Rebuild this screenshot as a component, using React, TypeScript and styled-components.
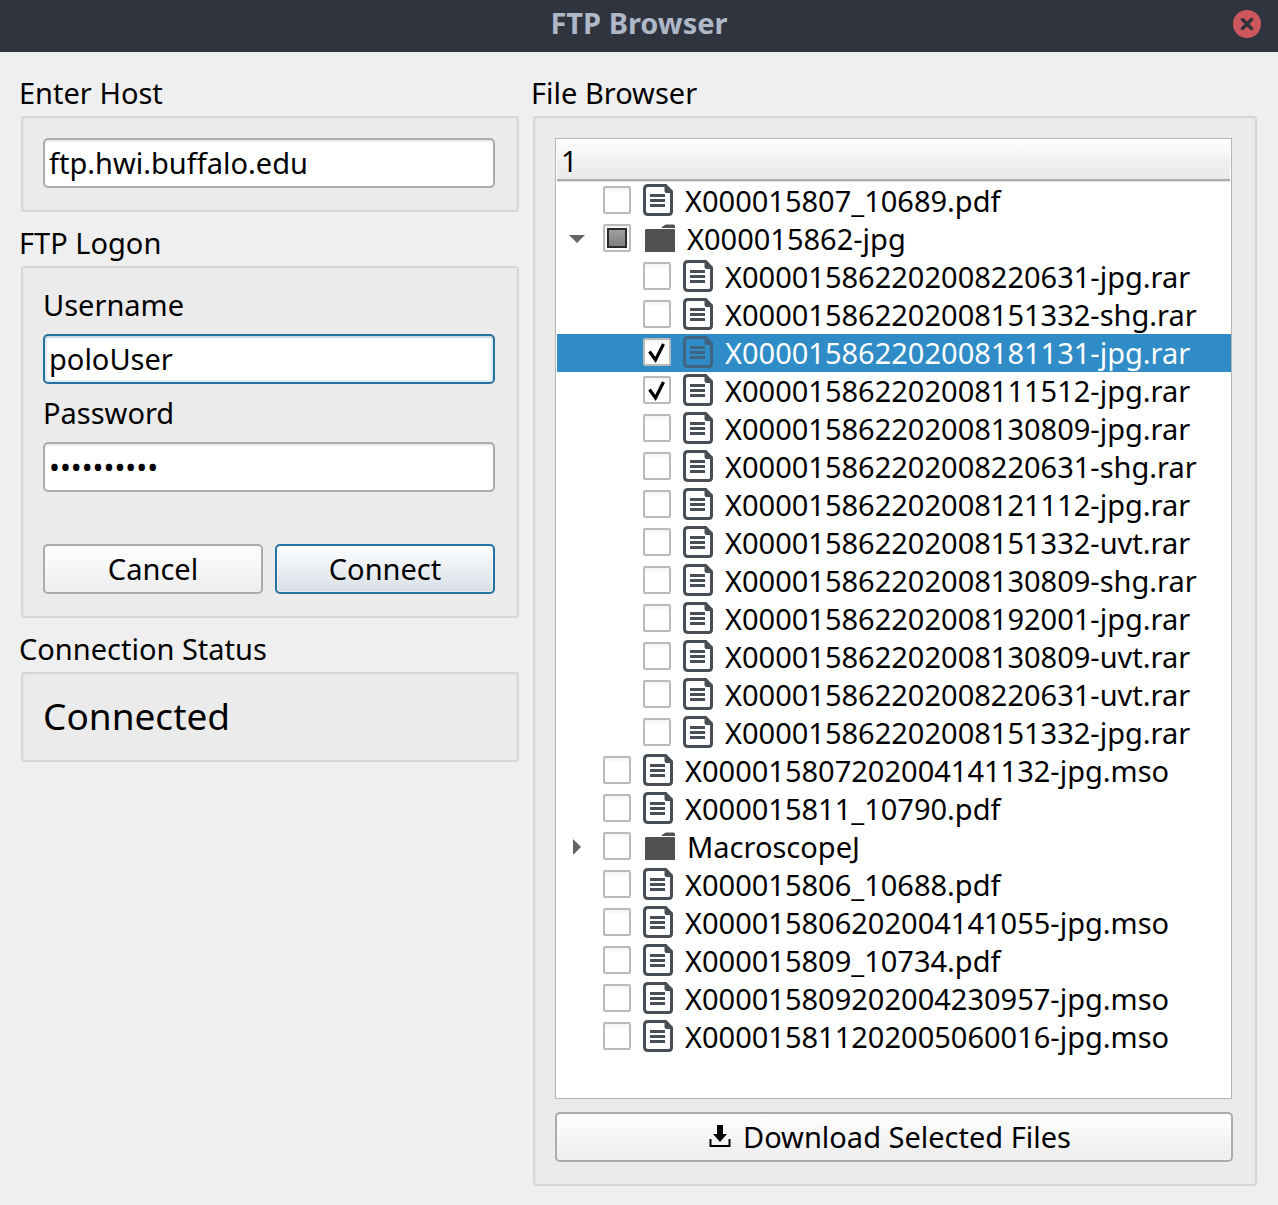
import React, { useEffect, useRef, useState } from "react";
import styled, { createGlobalStyle, css } from "styled-components";

const GlobalStyle = createGlobalStyle`
  *, *::before, *::after { box-sizing: border-box; }
  body { margin: 0; background: #efefef; }
  body, button, input {
    font-family: "Noto Sans", "Open Sans", sans-serif;
    font-size: 29px;
    color: #000;
  }
  h1, h2, p, ul { margin: 0; padding: 0; font-weight: 400; }
`;

const Window = styled.div`
  display: flex;
  flex-direction: column;
  min-height: 100vh;
  background: #efefef;
`;

const TitleBar = styled.header`
  display: grid;
  grid-template-columns: 1fr auto 1fr;
  align-items: center;
  height: 52px;
  padding: 0 17px 4px;
  background: #2f343f;
`;

const Title = styled.h1`
  grid-column: 2;
  padding-bottom: 2px;
  font-size: 29px;
  line-height: 40px;
  font-weight: 700;
  color: #afb8c6;
`;

const CloseButton = styled.button`
  justify-self: end;
  display: flex;
  width: 28px;
  height: 28px;
  padding: 0;
  border: 0;
  border-radius: 50%;
  background: #cc575d;
`;

const Content = styled.main`
  flex: 1;
  display: grid;
  grid-template-columns: minmax(0, 498fr) minmax(0, 724fr);
  column-gap: 14px;
  padding: 20px 21px 19px;
`;

const Column = styled.div`
  display: flex;
  flex-direction: column;
  gap: 10px;
`;

const Group = styled.section<{ $grow?: boolean }>`
  display: flex;
  flex-direction: column;
  flex: ${(p) => (p.$grow ? 1 : "none")};
`;

const GroupTitle = styled.h2`
  margin-left: -2px;
  padding-bottom: 2px;
  font-size: 29px;
  line-height: 42px;
`;

const Panel = styled.div`
  flex: 1;
  display: flex;
  flex-direction: column;
  padding: 20px 22px 22px 20px;
  border: 2px solid #d6d6d6;
  border-radius: 3px;
  background: #ebebeb;
  box-shadow: inset 0 0 2px 1px #e6e6e6;
`;

const Form = styled.form`
  display: flex;
  flex-direction: column;
  gap: 12px;
`;

const Field = styled.div`
  display: flex;
  flex-direction: column;
  gap: 10px;
`;

const FieldLabel = styled.label`
  padding-bottom: 2px;
  line-height: 34px;
`;

const TextBox = styled.input<{ $active?: boolean }>`
  width: 100%;
  height: 50px;
  padding: 0 4px 2px;
  border: 2px solid ${(p) => (p.$active ? "#2571a0" : "#ababab")};
  border-radius: 5px;
  outline: 0;
  background: #fff;
  box-shadow: ${(p) =>
    p.$active
      ? "inset 0 2px 0 #cbd9e3, inset 0 0 0 2px #e0ebf2"
      : "inset 0 2px 0 #ececec"};
`;

const ButtonRow = styled.div`
  display: grid;
  grid-template-columns: 1fr 1fr;
  gap: 12px;
  margin-top: 40px;
`;

const PushButton = styled.button<{ $primary?: boolean }>`
  display: flex;
  align-items: center;
  justify-content: center;
  width: 100%;
  height: 50px;
  padding: 0 0 2px;
  border: 2px solid #ababab;
  border-radius: 5px;
  background: linear-gradient(#fefefe, #ededed);
  box-shadow: inset 0 0 0 1px rgba(255, 255, 255, 0.4);
  ${(p) =>
    p.$primary &&
    css`
      border-color: #2571a0;
      background: linear-gradient(#fcfdfe, #d8e0e5);
    `}
`;

const DownloadButton = styled(PushButton)`
  gap: 12px;
  padding-right: 8px;
`;

const Status = styled.p`
  font-size: 37px;
  line-height: 44px;
`;

const Tree = styled.div`
  flex: 1;
  margin: 0 1px 13px 0;
  padding: 1px 0 1px 1px;
  border: 1px solid #b4b4b4;
  background: #fff;
`;

const TreeHeader = styled.div`
  height: 41px;
  margin: 0 1px 1px 0;
  padding-left: 4px;
  border-bottom: 2px solid #ababab;
  background: linear-gradient(#fdfdfd, #f4f4f4 50%, #f0f0f0 50%, #e9e9e9);
  box-shadow: 0 1px 0 #e2e2e2;
  line-height: 42px;
`;

const List = styled.ul`
  list-style: none;
`;

const Row = styled.div<{ $depth: number; $selected: boolean }>`
  display: flex;
  align-items: center;
  gap: 12px;
  height: 38px;
  padding: 0 0 2px ${(p) => p.$depth * 40}px;
  background: ${(p) => (p.$selected ? "#308cc6" : "transparent")};
  color: ${(p) => (p.$selected ? "#fff" : "#000")};
`;

const ArrowSlot = styled.div`
  flex: none;
  display: flex;
  justify-content: center;
  width: 34px;
  padding-left: 6px;
`;

const ArrowButton = styled.button`
  display: flex;
  padding: 0;
  border: 0;
  background: none;
`;

const CheckFrame = styled.span`
  flex: none;
  display: grid;
  width: 28px;
  height: 28px;
  > * {
    grid-area: 1 / 1;
  }
  > svg {
    pointer-events: none;
  }
`;

const CheckInput = styled.input`
  appearance: none;
  width: 28px;
  height: 28px;
  margin: 0;
  border: 2px solid #bababa;
  border-radius: 2px;
  background: linear-gradient(#f3f3f3, #fff 5px);
`;

const RowLabel = styled.label`
  padding-top: 2px;
  line-height: 36px;
  white-space: nowrap;
`;

const Icon = styled.svg`
  flex: none;
  display: block;
`;

function FileIcon({ selected }: { selected: boolean }) {
  const color = selected ? "#3f6480" : "#474e55";
  return (
    <Icon width="30" height="32" viewBox="0 0 30 32" aria-hidden="true">
      <path
        d="M5 1.500H22.500L28.500 8V27.500Q28.500 30.500 25.500 30.500H5Q1.500 30.500 1.500 27V5Q1.500 1.500 5 1.500Z"
        fill={selected ? "none" : "#fff"}
        stroke={color}
        strokeWidth="3"
      />
      <path d="M21.500 0H23L30 7V9H23.500Q21.500 9 21.500 7Z" fill={color} />
      <path d="M7 11.500H22M7 16.500H22M7 21.500H22" stroke={color} strokeWidth="3" />
    </Icon>
  );
}

function FolderIcon() {
  return (
    <Icon width="32" height="32" viewBox="0 0 32 32" fill="#505050" aria-hidden="true">
      <path d="M2 8Q2 7 3 7H31Q32 7 32 8V30H2Z" />
      <path d="M18 6L21 3.500Q22 2.500 24 2.500H30.500Q32 2.500 32 4V6Z" />
    </Icon>
  );
}

function DownloadIcon() {
  return (
    <Icon width="22" height="24" viewBox="0 0 22 24" aria-hidden="true">
      <path d="M8 1H14V10H18L11 18L4 10H8Z" />
      <path d="M1.500 15V22H20.500V15" fill="none" stroke="#000" strokeWidth="2" />
    </Icon>
  );
}

type CheckState = "off" | "on" | "partial";

function CheckBox({ id, state, onChange }: { id: string; state: CheckState; onChange: () => void }) {
  const ref = useRef<HTMLInputElement>(null);
  useEffect(() => {
    if (ref.current) ref.current.indeterminate = state === "partial";
  }, [state]);
  return (
    <CheckFrame>
      <CheckInput ref={ref} id={id} type="checkbox" checked={state === "on"} onChange={onChange} />
      {state === "on" && (
        <svg width="28" height="28" viewBox="0 0 28 28" aria-hidden="true">
          <path d="M6.500 13.500L12.500 22L20.500 6" fill="none" stroke="#000" strokeWidth="3.200" />
        </svg>
      )}
      {state === "partial" && (
        <svg width="28" height="28" viewBox="0 0 28 28" aria-hidden="true">
          <defs>
            <linearGradient id="partial-fill" x1="0" y1="0" x2="0" y2="1">
              <stop offset="0" stopColor="#a2a2a2" />
              <stop offset="1" stopColor="#7c7c7c" />
            </linearGradient>
          </defs>
          <rect x="5" y="5" width="18" height="18" fill="url(#partial-fill)" stroke="#2b2b2b" strokeWidth="2" />
        </svg>
      )}
    </CheckFrame>
  );
}

interface Entry {
  name: string;
  children?: Entry[];
}

const FILES: Entry[] = [
  { name: "X000015807_10689.pdf" },
  {
    name: "X000015862-jpg",
    children: [
      { name: "X000015862202008220631-jpg.rar" },
      { name: "X000015862202008151332-shg.rar" },
      { name: "X000015862202008181131-jpg.rar" },
      { name: "X000015862202008111512-jpg.rar" },
      { name: "X000015862202008130809-jpg.rar" },
      { name: "X000015862202008220631-shg.rar" },
      { name: "X000015862202008121112-jpg.rar" },
      { name: "X000015862202008151332-uvt.rar" },
      { name: "X000015862202008130809-shg.rar" },
      { name: "X000015862202008192001-jpg.rar" },
      { name: "X000015862202008130809-uvt.rar" },
      { name: "X000015862202008220631-uvt.rar" },
      { name: "X000015862202008151332-jpg.rar" },
    ],
  },
  { name: "X000015807202004141132-jpg.mso" },
  { name: "X000015811_10790.pdf" },
  { name: "MacroscopeJ", children: [] },
  { name: "X000015806_10688.pdf" },
  { name: "X000015806202004141055-jpg.mso" },
  { name: "X000015809_10734.pdf" },
  { name: "X000015809202004230957-jpg.mso" },
  { name: "X000015811202005060016-jpg.mso" },
];

function toggled(set: Set<string>, names: string[], on: boolean) {
  const next = new Set(set);
  names.forEach((n) => (on ? next.add(n) : next.delete(n)));
  return next;
}

function FileTree() {
  const [checked, setChecked] = useState(
    new Set(["X000015862202008181131-jpg.rar", "X000015862202008111512-jpg.rar"])
  );
  const [open, setOpen] = useState(new Set(["X000015862-jpg"]));
  const [selected, setSelected] = useState("X000015862202008181131-jpg.rar");

  const stateOf = (entry: Entry): CheckState => {
    if (!entry.children?.length) return checked.has(entry.name) ? "on" : "off";
    const count = entry.children.filter((c) => checked.has(c.name)).length;
    if (count === 0) return "off";
    return count === entry.children.length ? "on" : "partial";
  };

  const renderEntry = (entry: Entry, depth: number) => {
    const state = stateOf(entry);
    const isOpen = open.has(entry.name);
    const isSelected = selected === entry.name;
    const names = entry.children?.length ? entry.children.map((c) => c.name) : [entry.name];
    return (
      <li key={entry.name}>
        <Row $depth={depth} $selected={isSelected} onClick={() => setSelected(entry.name)}>
          <ArrowSlot>
            {entry.children && (
              <ArrowButton
                type="button"
                aria-label={isOpen ? "Collapse" : "Expand"}
                aria-expanded={isOpen}
                onClick={() => setOpen(toggled(open, [entry.name], !isOpen))}
              >
                <svg width="16" height="16" viewBox="0 0 16 16" fill="#646464" aria-hidden="true">
                  <path d={isOpen ? "M0 5H16L8 13Z" : "M4 1V17L12 9Z"} />
                </svg>
              </ArrowButton>
            )}
          </ArrowSlot>
          <CheckBox
            id={entry.name}
            state={state}
            onChange={() => setChecked(toggled(checked, names, state !== "on"))}
          />
          {entry.children ? <FolderIcon /> : <FileIcon selected={isSelected} />}
          <RowLabel htmlFor={entry.name}>{entry.name}</RowLabel>
        </Row>
        {isOpen && entry.children && <List>{entry.children.map((c) => renderEntry(c, depth + 1))}</List>}
      </li>
    );
  };

  return (
    <Tree>
      <TreeHeader>1</TreeHeader>
      <List>{FILES.map((f) => renderEntry(f, 0))}</List>
    </Tree>
  );
}

export default function App() {
  return (
    <>
      <GlobalStyle />
      <Window>
        <TitleBar>
          <Title>FTP Browser</Title>
          <CloseButton type="button" aria-label="Close">
            <svg width="28" height="28" viewBox="0 0 28 28" aria-hidden="true">
              <path d="M9.500 9.500L18.500 18.500M18.500 9.500L9.500 18.500" stroke="#2f343f" strokeWidth="3.400" strokeLinecap="round" />
            </svg>
          </CloseButton>
        </TitleBar>
        <Content>
          <Column>
            <Group>
              <GroupTitle>
                <label htmlFor="host">Enter Host</label>
              </GroupTitle>
              <Panel>
                <TextBox id="host" type="text" defaultValue="ftp.hwi.buffalo.edu" />
              </Panel>
            </Group>
            <Group>
              <GroupTitle>FTP Logon</GroupTitle>
              <Panel>
                <Form onSubmit={(e) => e.preventDefault()}>
                  <Field>
                    <FieldLabel htmlFor="username">Username</FieldLabel>
                    <TextBox id="username" type="text" defaultValue="poloUser" $active />
                  </Field>
                  <Field>
                    <FieldLabel htmlFor="password">Password</FieldLabel>
                    <TextBox id="password" type="password" defaultValue="0123456789" />
                  </Field>
                  <ButtonRow>
                    <PushButton type="button">Cancel</PushButton>
                    <PushButton type="submit" $primary>
                      Connect
                    </PushButton>
                  </ButtonRow>
                </Form>
              </Panel>
            </Group>
            <Group>
              <GroupTitle>Connection Status</GroupTitle>
              <Panel>
                <Status role="status">Connected</Status>
              </Panel>
            </Group>
          </Column>
          <Group $grow>
            <GroupTitle>File Browser</GroupTitle>
            <Panel>
              <FileTree />
              <DownloadButton type="button">
                <DownloadIcon />
                Download Selected Files
              </DownloadButton>
            </Panel>
          </Group>
        </Content>
      </Window>
    </>
  );
}
